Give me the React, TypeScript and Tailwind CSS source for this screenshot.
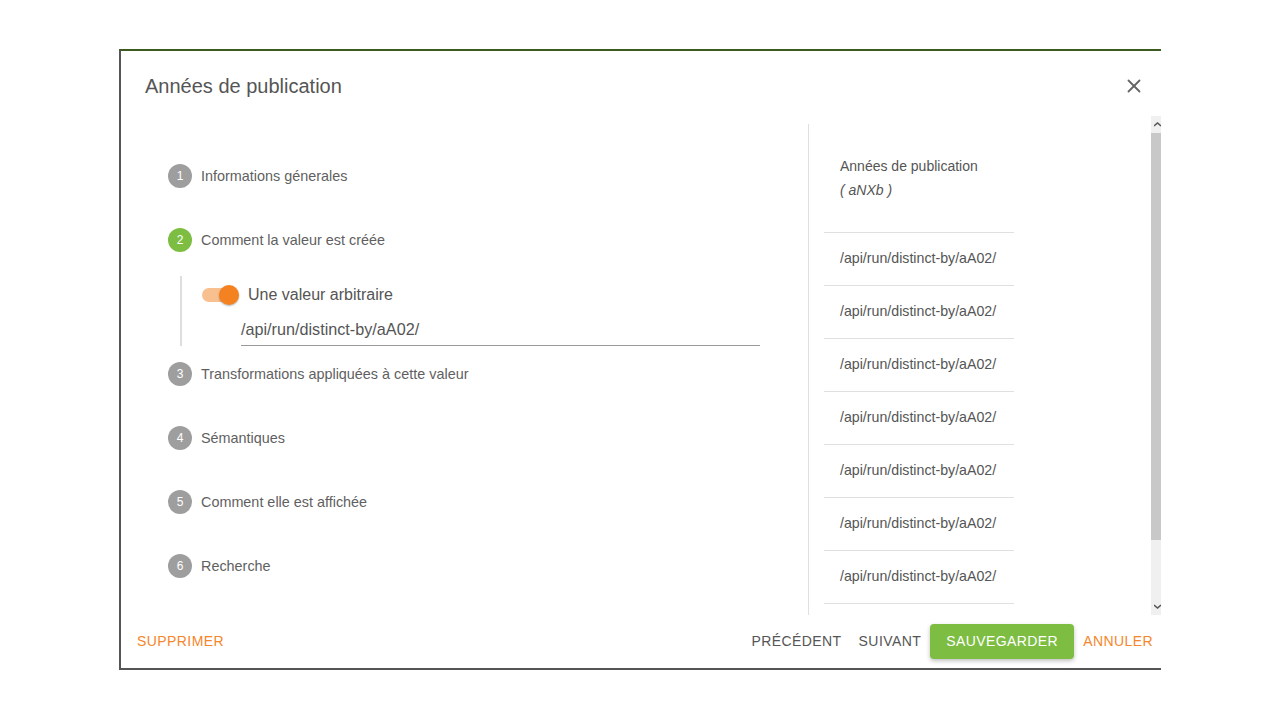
import { X } from 'lucide-react';

const steps = [
  { n: 1, label: 'Informations génerales' },
  { n: 2, label: 'Comment la valeur est créée', active: true },
  { n: 3, label: 'Transformations appliquées à cette valeur' },
  { n: 4, label: 'Sémantiques' },
  { n: 5, label: 'Comment elle est affichée' },
  { n: 6, label: 'Recherche' },
];

const rows = Array.from({ length: 8 }, () => '/api/run/distinct-by/aA02/');

function Step({ n, label, active }: { n: number; label: string; active?: boolean }) {
  return (
    <div className="flex items-center h-6">
      <div
        className={`w-6 h-6 rounded-full flex items-center justify-center text-[12px] text-white ${
          active ? 'bg-[#7cbd42]' : 'bg-[#9e9e9e]'
        }`}
      >
        {n}
      </div>
      <span className="ml-[9px] text-[14.4px] text-[#5f5f5f] pt-[1px]">{label}</span>
    </div>
  );
}

export default function App() {
  return (
    <div className="w-[1280px] h-[720px] bg-white font-['Liberation_Sans',Arial,sans-serif] pt-[49px] pl-[119px]">
      <div className="w-[1042px] h-[621px] flex flex-col border-t-2 border-t-[#3d5a1e] border-l-2 border-l-[#555] border-b-2 border-b-[#555] overflow-hidden bg-white">
        {/* header */}
        <div className="h-[65px] flex items-center justify-between pl-6 pr-[16px] shrink-0">
          <h2 className="text-[20px] text-[#555] pt-1">Années de publication</h2>
          <X className="w-[22px] h-[22px] text-[#666] mt-[4px]" strokeWidth={2} />
        </div>

        {/* body */}
        <div className="h-[499px] flex shrink-0 overflow-hidden">
          <div className="w-[687px] pl-[47px] pt-[48px] shrink-0">
            <div className="flex flex-col gap-10">
              <Step {...steps[0]} />
              <Step {...steps[1]} />
            </div>
            <div className="ml-3 mt-6 border-l-2 border-[#ddd] pl-5 h-[70px]">
              <div className="flex items-center h-[38px]">
                <div className="relative w-[37px] h-[20px] flex items-center">
                  <div className="w-[34px] h-[14px] rounded-full bg-[#f9c08f]" />
                  <div className="absolute right-0 top-0 w-5 h-5 rounded-full bg-[#f58220] shadow-[0_1px_2px_rgba(0,0,0,0.3)]" />
                </div>
                <span className="ml-[9px] text-[16px] text-[#555]">Une valeur arbitraire</span>
              </div>
              <div className="ml-[39px] w-[519px] h-[32px] border-b border-[#999] flex items-center text-[16.2px] text-[#555]">
                /api/run/distinct-by/aA02/
              </div>
            </div>
            <div className="flex flex-col gap-10 mt-4">
              {steps.slice(2).map(s => (
                <Step key={s.n} {...s} />
              ))}
            </div>
          </div>

          <div className="mt-2 border-l border-[#e0e0e0] pl-[15px] flex-1">
            <div className="w-[190px]">
              <div className="pt-[30px] pb-[30px] border-b border-[#e0e0e0] pl-4 text-[14px] text-[#555] leading-6">
                <div>Années de publication</div>
                <div className="italic">( aNXb )</div>
              </div>
              {rows.map((r, i) => (
                <div key={i} className="h-[53px] border-b border-[#e0e0e0] pl-4 flex items-center text-[14.2px] text-[#555]">
                  {r}
                </div>
              ))}
            </div>
          </div>

          {/* scrollbar */}
          <div className="w-[10px] shrink-0 bg-[#f0f0f0] flex flex-col">
            <div className="h-[17px] flex items-center pl-[3px]">
              <svg width="7" height="5" viewBox="0 0 7 5">
                <path d="M0 4 L3.5 1 L7 4" stroke="#555" strokeWidth="1.5" fill="none" />
              </svg>
            </div>
            <div className="h-[407px] bg-[#c8c8c8]" />
            <div className="flex-1" />
            <div className="h-[17px] flex items-center pl-[3px]">
              <svg width="7" height="5" viewBox="0 0 7 5">
                <path d="M0 1 L3.5 4 L7 1" stroke="#555" strokeWidth="1.5" fill="none" />
              </svg>
            </div>
          </div>
        </div>

        {/* footer */}
        <div className="flex-1 flex items-center justify-between pl-2 pr-0 text-[14px]">
          <button className="px-2 h-9 uppercase tracking-[0.03em] text-[#f5862b]">Supprimer</button>
          <div className="flex items-center gap-[1px]">
            <button className="px-2 h-9 uppercase tracking-[0.03em] text-[#555]">Précédent</button>
            <button className="px-2 h-9 uppercase tracking-[0.03em] text-[#555]">Suivant</button>
            <button className="px-4 h-[35px] rounded uppercase tracking-[0.03em] bg-[#7cbd42] text-white shadow-[0_2px_4px_rgba(0,0,0,0.25)]">
              Sauvegarder
            </button>
            <button className="px-2 h-9 uppercase tracking-[0.03em] text-[#f5862b]">Annuler</button>
          </div>
        </div>
      </div>
    </div>
  );
}
